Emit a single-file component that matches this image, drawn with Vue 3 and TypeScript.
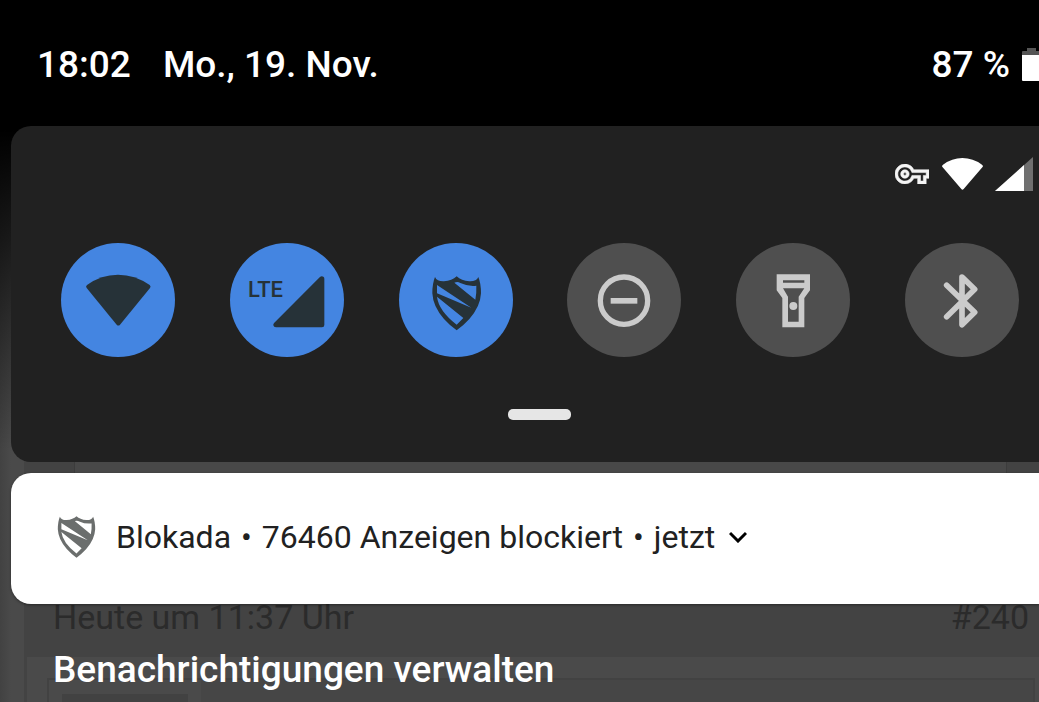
<script setup lang="ts">
import { ref } from 'vue'

type TileKind = 'wifi' | 'mobile' | 'shield' | 'dnd' | 'torch' | 'bluetooth'
interface Tile {
  kind: TileKind
  label: string
  on: boolean
}

const tiles = ref<Tile[]>([
  { kind: 'wifi', label: 'WLAN', on: true },
  { kind: 'mobile', label: 'Mobile Daten', on: true },
  { kind: 'shield', label: 'Blokada', on: true },
  { kind: 'dnd', label: 'Nicht stören', on: false },
  { kind: 'torch', label: 'Taschenlampe', on: false },
  { kind: 'bluetooth', label: 'Bluetooth', on: false },
])

const shieldPath =
  'M9 3Q15 17 36 16Q60 14 74 1Q88 14 112 16Q133 17 139 3Q147 22 147 52Q145 92 112 129Q92 151 74 163Q56 151 36 129Q3 92 1 52Q1 22 9 3Z' +
  'M67 20Q77 16 85 21Q109 32 133 29Q134 50 130 71Z' +
  'M15 27L118 95L15 52Z' +
  'M15 62L94 126L74 146Q20 104 15 62Z'
</script>

<template>
  <div class="screen">
    <div class="backdrop" aria-hidden="true">
      <div class="post">
        <div class="upper"></div>
        <div class="meta"><span>Heute um 11:37 Uhr</span><span>#240</span></div>
        <div class="body">
          <div class="quote"><div class="avatar"><div class="picture"></div></div></div>
        </div>
      </div>
    </div>

    <main class="shade">
      <header class="status">
        <time>18:02</time>
        <span class="date">Mo., 19. Nov.</span>
        <span class="percent">87 %</span>
        <svg class="battery" viewBox="0 0 18 34" aria-hidden="true">
          <path d="M5 0h9v3h4v5H0V4q0-1 1-1h4z" fill="#555" />
          <path d="M0 7h18v26H1q-1 0-1-1z" fill="#fff" />
        </svg>
      </header>

      <section class="panel">
        <div class="signals">
          <svg class="key" viewBox="0 5 24 14" fill="#f4f4f4" stroke="#f4f4f4" stroke-width="0.4" aria-hidden="true">
            <path d="M22 19h-6v-4h-2.680c-1.140 2.420-3.600 4-6.320 4-3.860 0-7-3.140-7-7s3.140-7 7-7c2.720 0 5.170 1.580 6.320 4H24v6h-2v4zm-4-2h2v-4h2v-2H11.940l-.23-.67C11.010 8.340 9.110 7 7 7c-2.760 0-5 2.240-5 5s2.240 5 5 5c2.110 0 4.010-1.340 4.710-3.330l.23-.67H18v4zM7 15c-1.650 0-3-1.350-3-3s1.350-3 3-3 3 1.350 3 3-1.350 3-3 3zm0-4c-.55 0-1 .45-1 1s.45 1 1 1 1-.45 1-1-.45-1-1-1z" />
          </svg>
          <svg class="wifi" viewBox="0 0 123 96" fill="#fff" aria-hidden="true">
            <path d="M2 28Q-2 24 3 20Q30 0 61 0Q93 0 120 20Q125 24 121 28L65 93Q61 97 58 93Z" />
          </svg>
          <svg class="cell" viewBox="0 0 114 102" aria-hidden="true">
            <path d="M0 102L114 0V102Z" fill="#707070" />
            <path d="M0 102L87 24V102Z" fill="#fff" />
          </svg>
        </div>

        <div class="tiles">
          <button
            v-for="tile in tiles"
            :key="tile.kind"
            type="button"
            class="tile"
            :class="{ on: tile.on }"
            :aria-label="tile.label"
            :aria-pressed="tile.on"
            @click="tile.on = !tile.on"
          >
            <svg viewBox="0 0 342 342" fill="currentColor">
              <path
                v-if="tile.kind === 'wifi'"
                d="M77 135Q73 130 78 126Q120 95 171 95Q222 95 266 126Q271 130 267 135L177 245Q172 250 167 245Z"
              />
              <template v-else-if="tile.kind === 'mobile'">
                <path d="M269 103Q274 98 280 101Q283 103 283 107V246Q283 253 276 253H138Q131 253 130 247Q129 243 133 239Z" />
                <text x="54" y="162" font-size="66">LTE</text>
              </template>
              <path v-else-if="tile.kind === 'shield'" transform="translate(99 99)" fill-rule="evenodd" :d="shieldPath" />
              <template v-else-if="tile.kind === 'dnd'">
                <circle cx="171" cy="173" r="71" fill="none" stroke="currentColor" stroke-width="16" />
                <path d="M131 165h80v17h-80z" />
              </template>
              <template v-else-if="tile.kind === 'torch'">
                <path fill-rule="evenodd" d="M122 94H222V142L205 165V253H139V165L122 142ZM141 112V119H205V112ZM141 136L156 161V236H188V161L205 136Z" />
                <circle cx="172" cy="189" r="12" />
              </template>
              <path
                v-else
                d="M125 127L209 208L171 245V102L209 139L125 221"
                fill="none"
                stroke="currentColor"
                stroke-width="17"
                stroke-linecap="round"
                stroke-linejoin="round"
              />
            </svg>
          </button>
        </div>
        <div class="handle"></div>
      </section>

      <article class="notification">
        <svg class="shield" viewBox="0 0 148 164" fill="#6b6e6d" aria-hidden="true">
          <path fill-rule="evenodd" :d="shieldPath" />
        </svg>
        <p class="line">
          <span>Blokada</span><span>•</span><span>76460 Anzeigen blockiert</span><span>•</span><span>jetzt</span>
        </p>
        <button type="button" class="expand" aria-label="Maximieren">
          <svg viewBox="0 0 18 12" fill="none" stroke="#000" stroke-width="3" aria-hidden="true">
            <path d="M1 2L9 10L17 2" />
          </svg>
        </button>
      </article>

      <button type="button" class="manage">Benachrichtigungen verwalten</button>
    </main>
  </div>
</template>

<style>
html,
body {
  background: #4a4a4a;
}
</style>

<style scoped>
.screen {
  display: grid;
  grid-template-columns: minmax(0, 1fr);
  height: 100vh;
  overflow: hidden;
  font-family: Roboto, "Liberation Sans", sans-serif;
}

.backdrop,
.shade {
  grid-area: 1 / 1;
  min-height: 0;
}

.backdrop {
  display: flex;
  flex-direction: column;
  padding-left: 24px;
  background: linear-gradient(90deg, #424242 0, #4a4a4a 11px, #4a4a4a 24px, #434343 24px);
}

.post {
  flex: 1;
  display: flex;
  flex-direction: column;
}

.upper {
  height: 473px;
  margin-right: 32px;
  margin-left: 50px;
  border-right: 1px solid #3c3c3c;
  border-left: 1px solid #3c3c3c;
  background: #484848;
}

.meta {
  display: flex;
  justify-content: space-between;
  height: 60px;
  margin-top: 124px;
  padding: 0 10px 0 29px;
  color: #2b2b2b;
  font-size: 34px;
  line-height: 40px;
}

.body {
  flex: 1;
  margin-left: 3px;
  padding: 21px 4px 0 20px;
  background: #4a4a4a;
}

.quote {
  height: 100%;
  border: 2px solid #424242;
  background: #464646;
}

.avatar {
  width: 126px;
  padding: 14px 13px 0;
  background: #4a4a4a;
}

.picture {
  height: 40px;
  background: #424242;
}

.shade {
  display: flex;
  flex-direction: column;
  background: linear-gradient(180deg, #000 0, #000 130px, rgba(0, 0, 0, 0) 450px);
}

.status {
  display: flex;
  align-items: center;
  height: 126px;
  padding-top: 3px;
  padding-left: 37px;
  color: #fff;
  font-size: 37px;
  font-weight: 500;
  line-height: 44px;
  box-sizing: border-box;
}

.date {
  margin-left: 32px;
}

.percent {
  margin-left: auto;
}

.battery {
  flex: none;
  width: 18px;
  height: 34px;
  margin: 0 -1px 0 12px;
}

.panel {
  display: flex;
  flex-direction: column;
  margin-left: 11px;
  padding: 31px 0 42px;
  border-radius: 20px 0 0 20px;
  background: #212121;
}

.signals {
  display: flex;
  align-items: center;
  justify-content: flex-end;
  height: 34px;
  padding-right: 6px;
}

.key {
  width: 34px;
  height: 20px;
}

.wifi {
  width: 41px;
  height: 32px;
  margin: 0 12px 0 13px;
}

.cell {
  width: 38px;
  height: 34px;
}

.tiles {
  display: flex;
  justify-content: space-between;
  margin-top: 52px;
  padding: 0 20px 0 50px;
}

.tile {
  width: 114px;
  height: 114px;
  padding: 0;
  border: 0;
  border-radius: 50%;
  background: #4f4f4f;
  color: #cbcbcb;
  font-family: inherit;
  font-weight: 500;
}

.tile.on {
  background: #4485e1;
  color: #263238;
}

.tile svg {
  display: block;
  width: 100%;
}

.handle {
  align-self: center;
  width: 63px;
  height: 11px;
  margin-top: 52px;
  margin-left: 28px;
  border-radius: 5px;
  background: #e6e6e6;
}

.notification {
  display: flex;
  align-items: center;
  height: 131px;
  margin: 11px 0 0 11px;
  padding: 0 0 3px 46px;
  border-radius: 20px 0 0 20px;
  background: #fff;
  color: #212121;
  font-size: 32px;
  box-sizing: border-box;
  box-shadow: 0 1px 3px rgba(0, 0, 0, 0.4);
}

.shield {
  width: 39px;
  height: 42px;
  margin-right: 20px;
}

.line {
  display: flex;
  gap: 10px;
  margin: 0;
  line-height: 38px;
}

.expand {
  margin-left: 14px;
  padding: 0;
  border: 0;
  background: none;
}

.expand svg {
  display: block;
  width: 18px;
  height: 12px;
}

.manage {
  align-self: flex-start;
  margin: 44px 0 0 53px;
  padding: 0;
  border: 0;
  background: none;
  color: #fff;
  font-family: inherit;
  font-size: 37px;
  font-weight: 500;
  line-height: 44px;
}
</style>
